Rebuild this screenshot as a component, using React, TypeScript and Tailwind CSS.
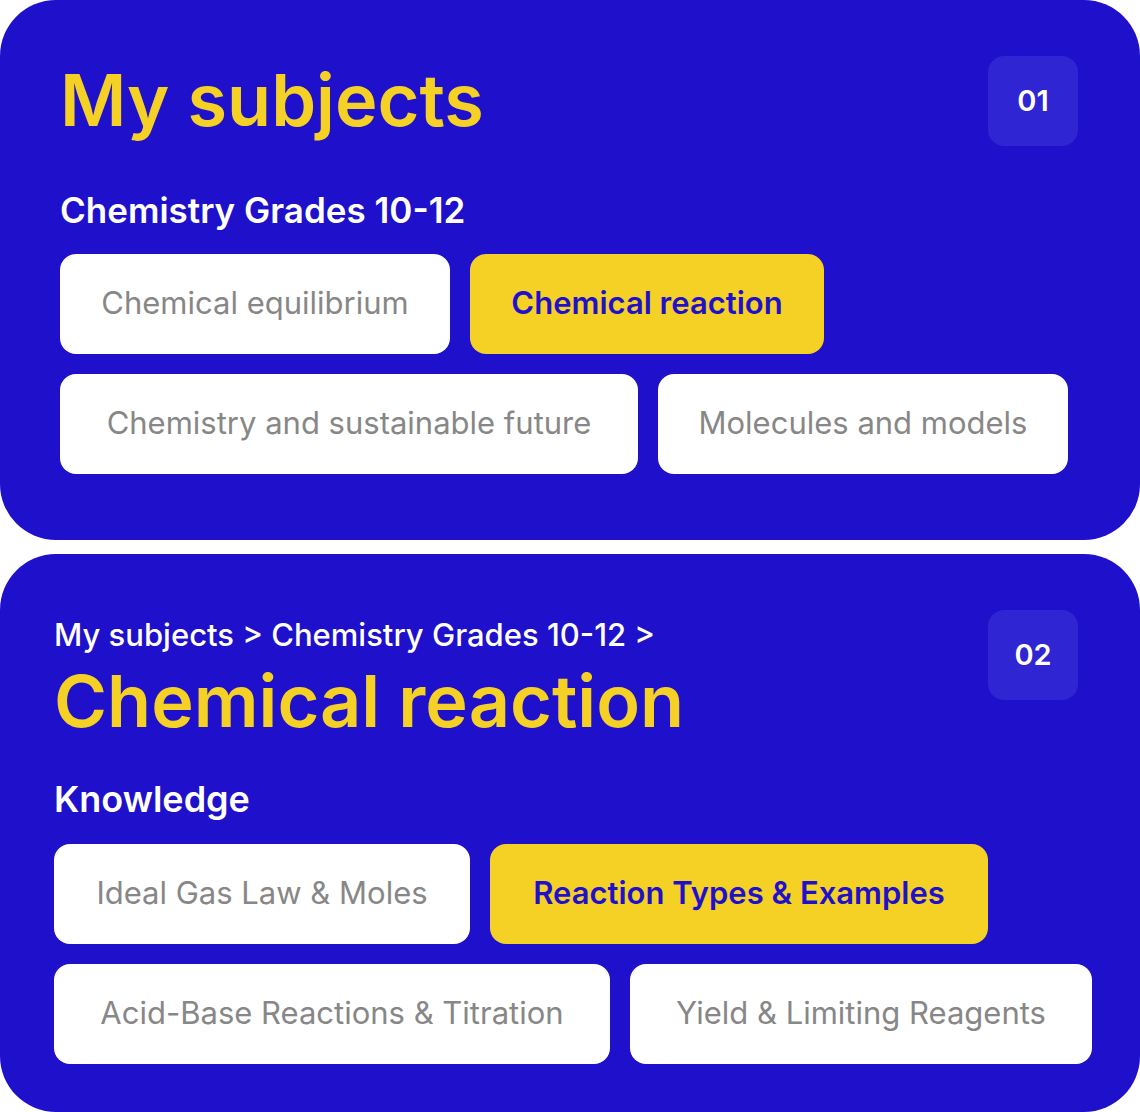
import React from "react";

type Chip = { label: string; w: string; active?: boolean };

function ChipBox({ label, w, active }: Chip) {
  return (
    <div
      className={
        active
          ? `${w} h-[100px] shrink-0 rounded-[16px] bg-[#F5D125] flex items-center justify-center pb-[4px] text-[31px] font-semibold text-[#1F10CB] leading-none`
          : `${w} h-[100px] shrink-0 rounded-[16px] bg-white flex items-center justify-center pb-[4px] text-[31px] font-normal text-[#878787] leading-none`
      }
    >
      <span className="whitespace-nowrap">{label}</span>
    </div>
  );
}

function Badge({ n }: { n: string }) {
  return (
    <div className="w-[90px] h-[90px] rounded-[16px] bg-[#3025D2] flex items-center justify-center pb-[2px] text-white text-[29px] font-semibold leading-none shrink-0">
      {n}
    </div>
  );
}

export default function App() {
  return (
    <div className="w-[1140px] bg-white flex flex-col gap-[14px] font-[Inter,sans-serif]">
      {/* Card 1 */}
      <section className="rounded-[56px] bg-[#1E10CB] pt-[56px] pb-[66px] pl-[60px] pr-[62px]">
        <div className="flex justify-between items-start">
          <div className="flex flex-col">
            <h1 className="mt-[8px] h-[72px] text-[72px] leading-[72px] font-semibold text-[#F5D125] whitespace-nowrap">
              My subjects
            </h1>
            <h2 className="mt-[57px] h-[34px] text-[35px] leading-[34px] font-semibold text-white whitespace-nowrap">
              Chemistry Grades 10-12
            </h2>
          </div>
          <Badge n="01" />
        </div>
        <div className="mt-[27px] flex flex-col gap-[20px]">
          <div className="flex gap-[20px]">
            <ChipBox label="Chemical equilibrium" w="w-[390px]" />
            <ChipBox label="Chemical reaction" w="w-[354px]" active />
          </div>
          <div className="flex gap-[20px]">
            <ChipBox label="Chemistry and sustainable future" w="w-[578px]" />
            <ChipBox label="Molecules and models" w="w-[410px]" />
          </div>
        </div>
      </section>

      {/* Card 2 */}
      <section className="rounded-[56px] bg-[#1E10CB] pt-[56px] pb-[48px] pl-[54px] pr-[62px]">
        <div className="flex justify-between items-start">
          <div className="flex flex-col">
            <p className="mt-[10px] h-[30px] text-[31px] leading-[30px] font-medium text-white whitespace-nowrap">
              My subjects &gt; Chemistry Grades 10-12 &gt;
            </p>
            <h1 className="mt-[15px] h-[72px] text-[72px] leading-[72px] font-semibold text-[#F5D125] whitespace-nowrap">
              Chemical reaction
            </h1>
            <h2 className="mt-[45px] h-[34px] text-[36px] leading-[34px] font-semibold text-white whitespace-nowrap">
              Knowledge
            </h2>
          </div>
          <Badge n="02" />
        </div>
        <div className="mt-[28px] flex flex-col gap-[20px]">
          <div className="flex gap-[20px]">
            <ChipBox label="Ideal Gas Law & Moles" w="w-[416px]" />
            <ChipBox label="Reaction Types & Examples" w="w-[498px]" active />
          </div>
          <div className="flex gap-[20px]">
            <ChipBox label="Acid-Base Reactions & Titration" w="w-[556px]" />
            <ChipBox label="Yield & Limiting Reagents" w="w-[462px]" />
          </div>
        </div>
      </section>
    </div>
  );
}
